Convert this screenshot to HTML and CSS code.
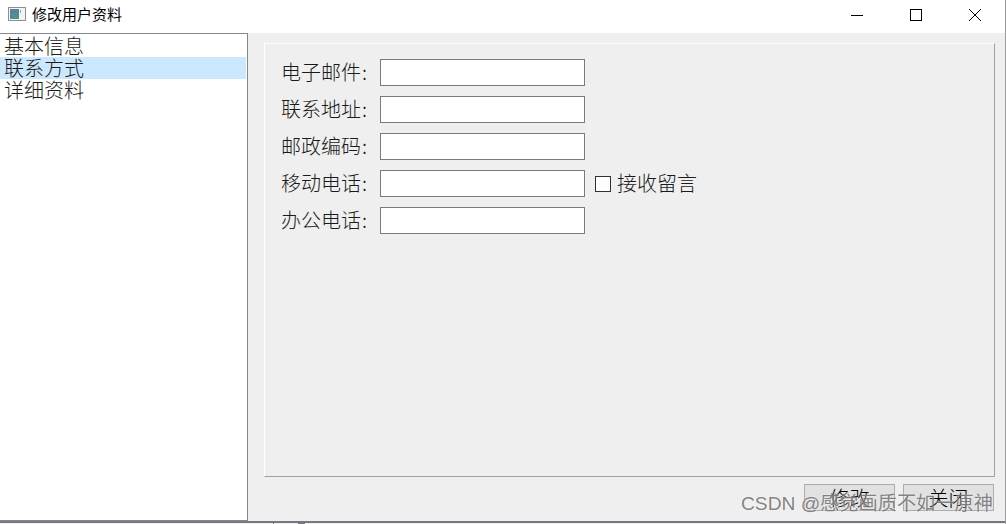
FILE: index.html
```html
<!DOCTYPE html>
<html lang="zh-CN">
<head>
<meta charset="utf-8">
<title>修改用户资料</title>
<link rel="stylesheet" href="styles.css">
</head>
<body>
<div class="window">
  <header class="titlebar">
    <svg class="app-icon" width="18" height="14" viewBox="0 0 18 14">
      <rect x="0.5" y="0.5" width="17" height="13" fill="#f2f4f4" stroke="#8a8f94"/>
      <rect x="2" y="2" width="9" height="10" fill="#4f8f8c"/>
      <rect x="2" y="2" width="9" height="4" fill="#5f7f9f"/>
      <rect x="12" y="3" width="1" height="3" fill="#9aa5a8"/>
    </svg>
    <span class="title">修改用户资料</span>
    <div class="controls">
      <button class="ctl" aria-label="最小化"><svg width="14" height="14" viewBox="0 0 14 14"><path d="M1 7.5H13" stroke="#000" fill="none"/></svg></button>
      <button class="ctl" aria-label="最大化"><svg width="14" height="14" viewBox="0 0 14 14"><rect x="1.5" y="1.5" width="11" height="11" stroke="#000" fill="none"/></svg></button>
      <button class="ctl" aria-label="关闭"><svg width="14" height="14" viewBox="0 0 14 14"><path d="M1 1L13 13M13 1L1 13" stroke="#000" fill="none"/></svg></button>
    </div>
  </header>
  <div class="client">
    <ul class="list">
      <li>基本信息</li>
      <li class="selected">联系方式</li>
      <li>详细资料</li>
    </ul>
    <div class="main">
      <section class="panel">
        <div class="row"><label class="lbl">电子邮件<span class="colon">:</span></label><input class="field" type="text"></div>
        <div class="row"><label class="lbl">联系地址<span class="colon">:</span></label><input class="field" type="text"></div>
        <div class="row"><label class="lbl">邮政编码<span class="colon">:</span></label><input class="field" type="text"></div>
        <div class="row"><label class="lbl">移动电话<span class="colon">:</span></label><input class="field" type="text"><span class="check"><span class="box"></span><span class="check-text">接收留言</span></span></div>
        <div class="row"><label class="lbl">办公电话<span class="colon">:</span></label><input class="field" type="text"></div>
      </section>
      <div class="actions">
        <button class="btn">修改</button>
        <button class="btn">关闭</button>
      </div>
    </div>
  </div>
  <div class="edge"></div>
</div>
<span class="tick tick-a"></span>
<span class="tick tick-b"></span>
<div class="watermark">CSDN @感觉画质不如一原神</div>
</body>
</html>
```
FILE: styles.css
```css
* { box-sizing: border-box; }
html, body { margin: 0; padding: 0; }
body {
  width: 1006px;
  height: 524px;
  overflow: hidden;
  position: relative;
  font-family: "Noto Sans CJK SC", "Liberation Sans", sans-serif;
  font-weight: 300;
  color: #1a1a1a;
  background: #efefef;
}
.window {
  height: 524px;
  display: flex;
  flex-direction: column;
  border-right: 1px solid #9a9a9a;
}
.titlebar {
  height: 33px;
  flex: none;
  background: #fff;
  display: flex;
  align-items: center;
  padding: 0 1px 6px 8px;
}
.app-icon { flex: none; }
.title { margin-left: 6px; font-size: 15px; font-weight: 400; color: #000; line-height: 1; }
.controls { margin-left: auto; display: flex; margin-top: 2px; }
.ctl {
  width: 59px;
  height: 27px;
  border: 0;
  padding: 0;
  background: transparent;
  display: flex;
  align-items: center;
  justify-content: center;
}
.client { flex: 1; display: flex; min-height: 0; }
.list {
  list-style: none;
  margin: 0;
  padding: 1px 1px 0 0;
  width: 248px;
  flex: none;
  background: #fff;
  border: 1px solid #828790;
  border-left: 0;
}
.list li {
  height: 22px;
  line-height: 22px;
  font-size: 20px;
  padding-left: 4px;
}
.list .selected { background: #cce8ff; }
.main { flex: 1; min-width: 0; padding: 10px 10px 0 16px; display: flex; flex-direction: column; }
.panel {
  height: 434px;
  flex: none;
  padding: 15px 0 0 16px;
  display: flex;
  flex-direction: column;
  gap: 10px;
  border: 1px solid;
  border-color: #fff #a0a0a0 #a0a0a0 #fff;
}
.row { display: flex; align-items: center; height: 27px; }
.lbl { width: 99px; font-size: 20px; line-height: 25px; padding-bottom: 2px; height: 27px; flex: none; }
.colon { margin-left: 1px; }
.field {
  width: 205px;
  height: 27px;
  border: 1px solid #7a7a7a;
  background: #fff;
  padding: 0;
  flex: none;
}
.check { display: flex; align-items: center; margin-left: 10px; font-size: 20px; }
.check-text { line-height: 25px; padding-bottom: 2px; }
.box { width: 16px; height: 16px; border: 1px solid #333; background: #fff; margin-right: 6px; }
.actions { display: flex; justify-content: flex-end; gap: 8px; margin-top: 7px; padding-right: 1px; }
.btn {
  width: 91px;
  height: 27px;
  background: #e1e1e1;
  border: 1px solid #adadad;
  font-family: inherit;
  font-weight: 300;
  font-size: 20px;
  line-height: 1;
  color: #000;
  padding: 0;
}
.edge { height: 3px; flex: none; background: #efefef; border-top: 2px solid #77787d; }
.tick { position: absolute; top: 522px; height: 2px; background: #77787d; }
.tick-a { left: 273px; width: 1px; }
.tick-b { left: 298px; width: 7px; }
.watermark {
  position: absolute;
  left: 741px;
  top: 491px;
  font-family: "Liberation Sans", "Noto Sans CJK SC", sans-serif;
  font-weight: 400;
  font-size: 19.2px;
  line-height: 26px;
  white-space: nowrap;
  color: rgba(110, 110, 110, 0.85);
  text-shadow: 0 0 2px rgba(255,255,255,0.7);
}
```
